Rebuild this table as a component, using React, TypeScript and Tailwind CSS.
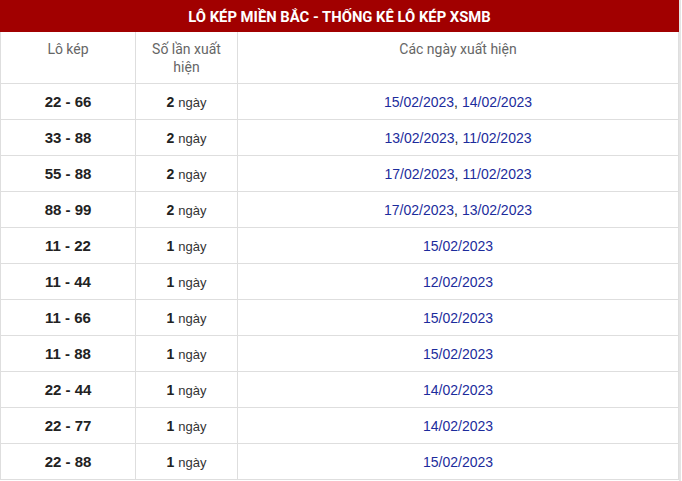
import React from "react";

const rows: [string, number, string[]][] = [
  ["22 - 66", 2, ["15/02/2023", "14/02/2023"]],
  ["33 - 88", 2, ["13/02/2023", "11/02/2023"]],
  ["55 - 88", 2, ["17/02/2023", "11/02/2023"]],
  ["88 - 99", 2, ["17/02/2023", "13/02/2023"]],
  ["11 - 22", 1, ["15/02/2023"]],
  ["11 - 44", 1, ["12/02/2023"]],
  ["11 - 66", 1, ["15/02/2023"]],
  ["11 - 88", 1, ["15/02/2023"]],
  ["22 - 44", 1, ["14/02/2023"]],
  ["22 - 77", 1, ["14/02/2023"]],
  ["22 - 88", 1, ["15/02/2023"]],
];

export default function App() {
  return (
    <div className="w-[682px] h-[481px] bg-white flex" style={{ fontFamily: '"Liberation Sans", Arial, sans-serif' }}>
      <div className="w-[679px] flex flex-col">
        <div
          className="h-[32px] bg-[#a10000] text-white font-bold text-[14.8px] flex items-center justify-center pt-[2px]"
          style={{ fontFamily: 'Roboto, "Liberation Sans", sans-serif' }}
        >
          LÔ KÉP MIỀN BẮC - THỐNG KÊ LÔ KÉP XSMB
        </div>
        <div className="grid grid-cols-[135px_102px_1fr] border-l border-[#dedede] text-[14px]">
          <div className="h-[52px] border-r border-b border-[#dedede] text-[#666] text-center pt-[8px] leading-[18px]" style={{ fontFamily: 'Roboto, sans-serif' }}>
            Lô kép
          </div>
          <div className="h-[52px] border-r border-b border-[#dedede] text-[#666] text-center pt-[8px] leading-[18px] px-[12px]" style={{ fontFamily: 'Roboto, sans-serif' }}>
            Số lần xuất hiện
          </div>
          <div className="h-[52px] border-r border-b border-[#dedede] text-[#666] text-center pt-[8px] leading-[18px]" style={{ fontFamily: 'Roboto, sans-serif' }}>
            Các ngày xuất hiện
          </div>
          {rows.map(([pair, n, dates]) => (
            <React.Fragment key={pair}>
              <div className="h-[36px] border-r border-b border-[#dedede] flex items-center justify-center pt-[2px] font-bold text-[#222] text-[15px]">
                {pair}
              </div>
              <div className="h-[36px] border-r border-b border-[#dedede] flex items-center justify-center pt-[2px] text-[#333]">
                <span className="font-bold text-[#222] mr-[4px]">{n}</span>
                <span className="text-[13px]">ngày</span>
              </div>
              <div className="h-[36px] border-r border-b border-[#dedede] flex items-center justify-center pt-[2px]">
                {dates.map((d, i) => (
                  <React.Fragment key={d + i}>
                    {i > 0 && <span className="text-[#222] mr-[4px]">,</span>}
                    <span className="text-[#1c2c9c]">{d}</span>
                  </React.Fragment>
                ))}
              </div>
            </React.Fragment>
          ))}
        </div>
      </div>
      <div className="w-[2px] bg-[#e4e4e4]" />
    </div>
  );
}
